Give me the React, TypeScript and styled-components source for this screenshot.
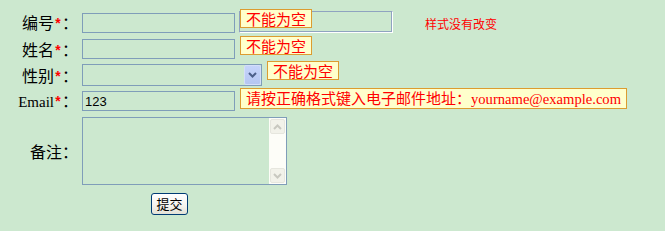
import styled, { createGlobalStyle } from "styled-components";

const GlobalStyle = createGlobalStyle`
  html, body {
    margin: 0;
    padding: 0;
    background: #cce8cf;
  }
  body {
    font-family: "Noto Sans CJK SC", sans-serif;
  }
`;

const Form = styled.form`
  width: 665px;
  height: 231px;
  display: flex;
  flex-direction: column;
  padding-top: 11px;
  box-sizing: border-box;
`;

const Row = styled.div<{ $mt?: number }>`
  display: flex;
  align-items: center;
  margin-top: ${(p) => p.$mt ?? 0}px;
`;

const Label = styled.label<{ $latin?: boolean }>`
  width: 78px;
  margin-right: 4px;
  text-align: right;
  white-space: nowrap;
  font-family: ${(p) =>
    p.$latin ? `"Liberation Serif", serif` : `"Noto Sans CJK SC", sans-serif`};
  font-size: ${(p) => (p.$latin ? 15 : 16)}px;
  line-height: 18px;
  color: #000;
`;

const Colon = styled.span`
  font-family: "Noto Sans CJK SC", sans-serif;
  font-size: 16px;
`;

const Star = styled.span`
  display: inline-block;
  width: 8px;
  text-align: center;
  color: #ff0000;
  font-family: "Liberation Sans", sans-serif;
  font-size: 14px;
  font-weight: bold;
  line-height: 10px;
  vertical-align: 1px;
`;

const Field = styled.div`
  position: relative;
  display: flex;
  align-items: flex-end;
`;

const TextInput = styled.input`
  width: 153px;
  height: 20px;
  box-sizing: border-box;
  border: 1px solid #7f9db9;
  background: transparent;
  padding: 0 2px;
  font-family: "Liberation Sans", sans-serif;
  font-size: 13px;
  color: #000;
  outline: none;
`;

const Ghost = styled.div`
  width: 154px;
  height: 22px;
  margin-left: 4px;
  box-sizing: border-box;
  border: 1px solid;
  border-color: #8fa3c0 #ffffff #ffffff #8fa3c0;
  box-shadow: inset -1px -1px 0 #8fa3c0;
`;

const Note = styled.span`
  margin-left: 32px;
  padding-bottom: 1px;
  font-size: 12px;
  line-height: 17px;
  color: #ff0000;
`;

const Tip = styled.span<{ $left: number; $top: number }>`
  position: absolute;
  left: ${(p) => p.$left}px;
  top: ${(p) => p.$top}px;
  white-space: nowrap;
  padding: 0 5px;
  border: 1px solid #dc9c30;
  background: #ffffcc;
  color: #ff0000;
  font-size: 15px;
  line-height: 17px;
`;

const Latin = styled.span`
  font-family: "Liberation Serif", serif;
  font-size: 14.6px;
`;

const SelectBox = styled.div`
  width: 180px;
  height: 22px;
  box-sizing: border-box;
  border: 1px solid #7f9db9;
  display: flex;
`;

const NativeSelect = styled.select`
  flex: 1;
  appearance: none;
  border: none;
  background: transparent;
  outline: none;
  font-size: 13px;
`;

const DropButton = styled.div`
  width: 17px;
  height: 20px;
  box-sizing: border-box;
  border: 1px solid #d4def9;
  border-radius: 2px;
  background: linear-gradient(#c5d4fb, #b5c6f2);
  display: flex;
  align-items: center;
  justify-content: center;
`;

const AreaBox = styled.div`
  width: 205px;
  height: 68px;
  box-sizing: border-box;
  border: 1px solid #7f9db9;
  display: flex;
`;

const TextArea = styled.textarea`
  flex: 1;
  border: none;
  background: transparent;
  resize: none;
  outline: none;
  overflow: hidden;
`;

const ScrollTrack = styled.div`
  width: 17px;
  background: #fdfdf8;
  display: flex;
  flex-direction: column;
  justify-content: space-between;
  padding: 1px 0;
`;

const ScrollBtn = styled.div`
  width: 15px;
  height: 15px;
  margin-left: 1px;
  box-sizing: border-box;
  border: 1px solid #e6e6de;
  border-radius: 2px;
  background: #f2f2ea;
  display: flex;
  align-items: center;
  justify-content: center;
`;

const Submit = styled.button`
  margin-left: 69px;
  width: 37px;
  height: 22px;
  box-sizing: border-box;
  padding: 0;
  border: 1px solid #003c74;
  border-radius: 3px;
  background: linear-gradient(#ffffff, #f4f3ee 60%, #e3e1d6);
  font-family: "Noto Sans CJK SC", sans-serif;
  font-size: 13px;
  line-height: 18px;
  color: #000;
`;

const Chevron = ({ up, color }: { up?: boolean; color: string }) => (
  <svg width="9" height="6" viewBox="0 0 9 6">
    <path
      d={up ? "M1 5 L4.5 1.5 L8 5" : "M1 1 L4.5 4.5 L8 1"}
      fill="none"
      stroke={color}
      strokeWidth="2"
    />
  </svg>
);

export default function App() {
  return (
    <>
      <GlobalStyle />
      <Form onSubmit={(e) => e.preventDefault()}>
        <Row>
          <Label>
            编号<Star>*</Star>
            <Colon>：</Colon>
          </Label>
          <Field>
            <TextInput />
            <Ghost />
            <Note>样式没有改变</Note>
            <Tip $left={158} $top={-2}>
              不能为空
            </Tip>
          </Field>
        </Row>
        <Row $mt={6}>
          <Label>
            姓名<Star>*</Star>
            <Colon>：</Colon>
          </Label>
          <Field>
            <TextInput />
            <Tip $left={158} $top={-3}>
              不能为空
            </Tip>
          </Field>
        </Row>
        <Row $mt={5}>
          <Label>
            性别<Star>*</Star>
            <Colon>：</Colon>
          </Label>
          <Field>
            <SelectBox>
              <NativeSelect>
                <option></option>
              </NativeSelect>
              <DropButton>
                <Chevron color="#4c5f8a" />
              </DropButton>
            </SelectBox>
            <Tip $left={185} $top={-3}>
              不能为空
            </Tip>
          </Field>
        </Row>
        <Row $mt={5}>
          <Label $latin>
            Email<Star>*</Star>
            <Colon>：</Colon>
          </Label>
          <Field>
            <TextInput defaultValue="123" />
            <Tip $left={158} $top={-3}>
              请按正确格式键入电子邮件地址：<Latin>yourname@example.com</Latin>
            </Tip>
          </Field>
        </Row>
        <Row $mt={6}>
          <Label>
            备注<Colon>：</Colon>
          </Label>
          <Field>
            <AreaBox>
              <TextArea />
              <ScrollTrack>
                <ScrollBtn>
                  <Chevron up color="#c8c8c0" />
                </ScrollBtn>
                <ScrollBtn>
                  <Chevron color="#c8c8c0" />
                </ScrollBtn>
              </ScrollTrack>
            </AreaBox>
          </Field>
        </Row>
        <Row $mt={8}>
          <Label />
          <Submit type="submit">提交</Submit>
        </Row>
      </Form>
    </>
  );
}
